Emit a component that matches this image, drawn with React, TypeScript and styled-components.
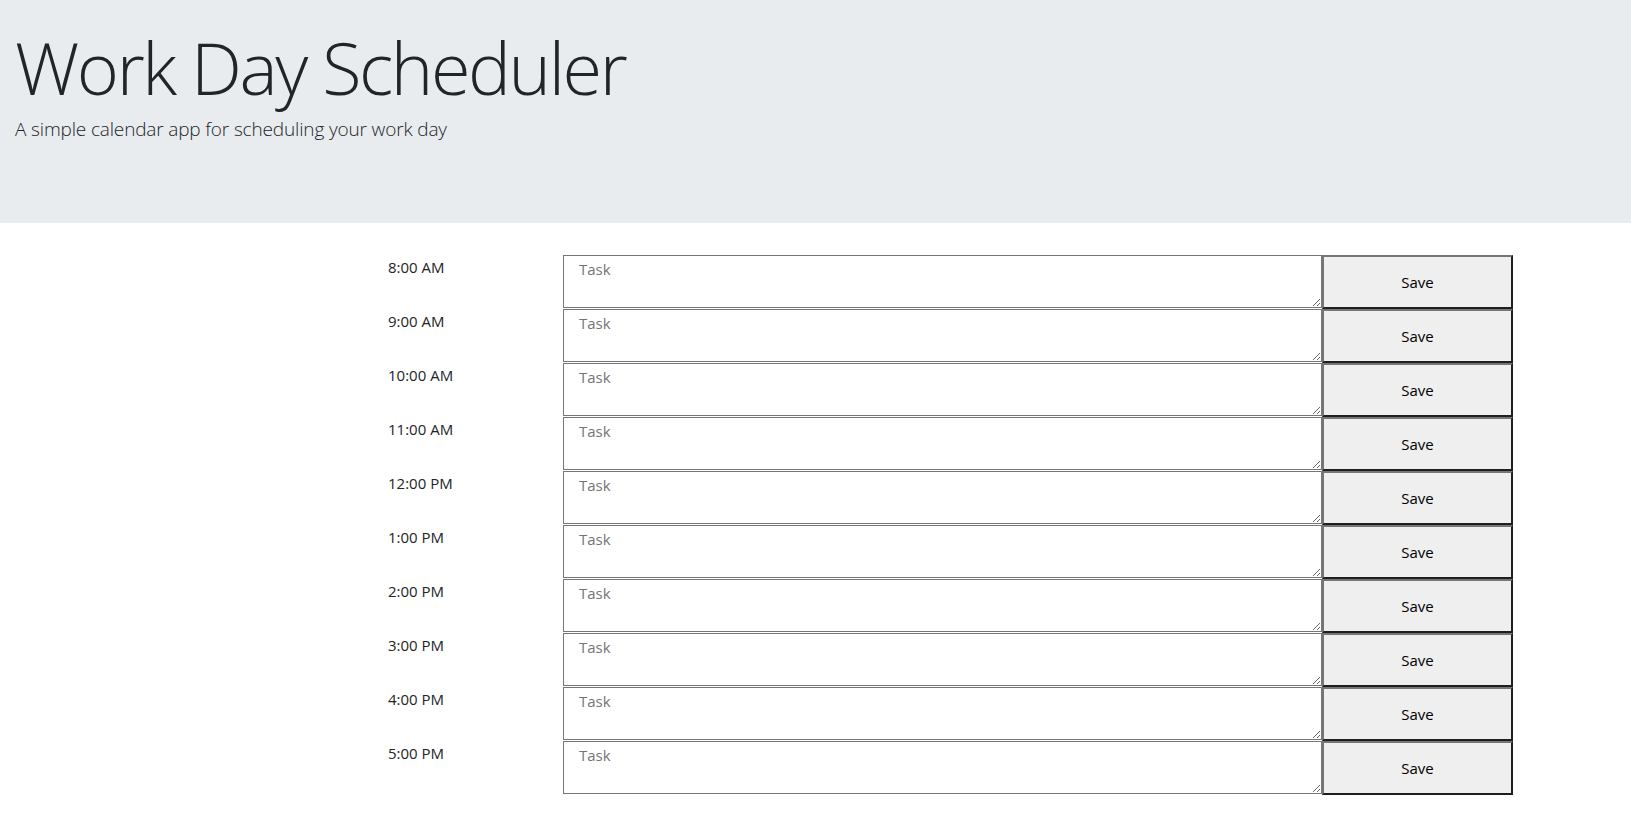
import React from "react";
import styled, { createGlobalStyle } from "styled-components";

const GlobalStyle = createGlobalStyle`
  * {
    box-sizing: border-box;
  }
  body {
    margin: 0;
    font-family: "Open Sans", "Noto Sans", sans-serif;
    font-size: 15px;
    line-height: 1.5;
    color: #212529;
    background: #ffffff;
  }
`;

const Header = styled.header`
  background: #e9ecef;
  height: 223px;
  padding: 24px 15px 0;
  margin-bottom: 32px;
`;

const Title = styled.h1`
  margin: 0;
  font-size: 72px;
  font-weight: 300;
  line-height: 86px;
  letter-spacing: -2.4px;
`;

const Lead = styled.p`
  margin: 4px 0 0;
  font-size: 19px;
  font-weight: 300;
  line-height: 30px;
  letter-spacing: -0.15px;
`;

const Schedule = styled.main`
  padding-left: 388px;
  padding-right: 118px;
  padding-bottom: 40px;
`;

const Row = styled.div`
  display: flex;
  height: 54px;
`;

const Hour = styled.div`
  width: 175px;
  flex-shrink: 0;
  padding-top: 1px;
  font-size: 15px;
`;

const Task = styled.textarea`
  width: 759px;
  height: 53px;
  flex-shrink: 0;
  margin: 0;
  padding: 2px 15px;
  border: 1px solid #767676;
  border-radius: 0;
  font-family: inherit;
  font-size: 15px;
  line-height: 1.5;
  color: #212529;
  background: #ffffff;

  &::placeholder {
    color: #757575;
  }
`;

const SaveButton = styled.button`
  width: 191px;
  height: 54px;
  flex-shrink: 0;
  margin: 0;
  background: #efefef;
  border-style: solid;
  border-width: 2px;
  border-color: #767676 #1f1f1f #1f1f1f #767676;
  font-family: inherit;
  font-size: 15px;
  color: #000000;
  cursor: pointer;
`;

const hours = [
  "8:00 AM",
  "9:00 AM",
  "10:00 AM",
  "11:00 AM",
  "12:00 PM",
  "1:00 PM",
  "2:00 PM",
  "3:00 PM",
  "4:00 PM",
  "5:00 PM",
];

const App: React.FC = () => {
  return (
    <>
      <GlobalStyle />
      <Header>
        <Title>Work Day Scheduler</Title>
        <Lead>A simple calendar app for scheduling your work day</Lead>
      </Header>
      <Schedule>
        {hours.map((hour) => (
          <Row key={hour}>
            <Hour>{hour}</Hour>
            <Task placeholder="Task" />
            <SaveButton>Save</SaveButton>
          </Row>
        ))}
      </Schedule>
    </>
  );
};

export default App;
